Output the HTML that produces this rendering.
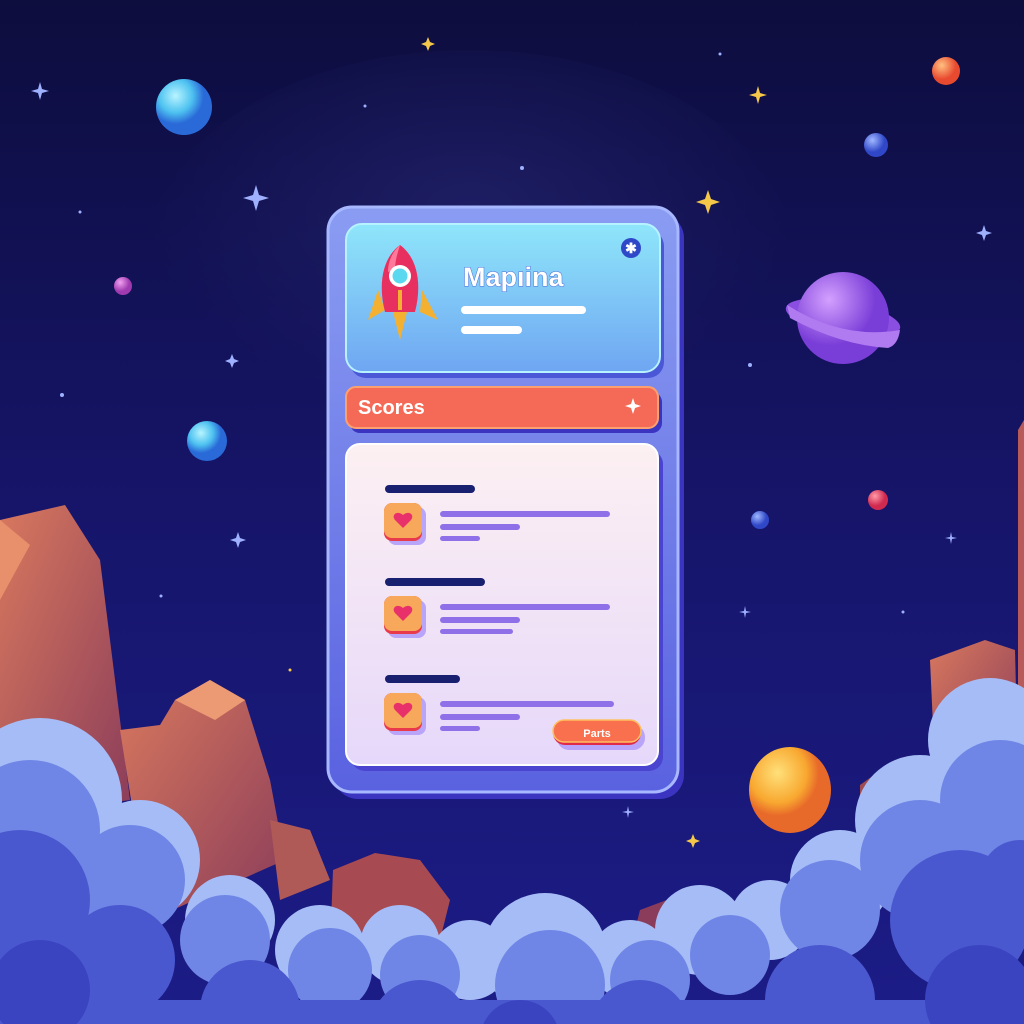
<!DOCTYPE html>
<html><head><meta charset="utf-8"><style>
html,body{margin:0;padding:0;width:1024px;height:1024px;overflow:hidden;background:#14125a}
svg{display:block}
text{font-family:"Liberation Sans",sans-serif;font-weight:bold}
</style></head><body>
<svg width="1024" height="1024" viewBox="0 0 1024 1024">
<defs>
<linearGradient id="bg" x1="0" y1="0" x2="0" y2="1">
<stop offset="0" stop-color="#0d0d3e"/><stop offset="0.5" stop-color="#16156a"/><stop offset="1" stop-color="#1c1c88"/></linearGradient>
<radialGradient id="glow" cx="0.5" cy="0.4" r="0.5"><stop offset="0" stop-color="#262670" stop-opacity="0.6"/><stop offset="1" stop-color="#262670" stop-opacity="0"/></radialGradient>
<linearGradient id="hdr" x1="0" y1="0" x2="0" y2="1"><stop offset="0" stop-color="#8fe6fa"/><stop offset="1" stop-color="#6fa6f2"/></linearGradient>
<linearGradient id="lst" x1="0" y1="0" x2="0" y2="1"><stop offset="0" stop-color="#fdf0f2"/><stop offset="1" stop-color="#e6d8fa"/></linearGradient>
<linearGradient id="card" x1="0" y1="0" x2="0" y2="1"><stop offset="0" stop-color="#8a9cf2"/><stop offset="1" stop-color="#5a62e0"/></linearGradient>
<linearGradient id="rock" x1="0" y1="0" x2="1" y2="1"><stop offset="0" stop-color="#d8785e"/><stop offset="1" stop-color="#8a3c5a"/></linearGradient>
<linearGradient id="cl" x1="0" y1="0" x2="0" y2="1"><stop offset="0" stop-color="#8aa4f2"/><stop offset="1" stop-color="#4a5ad4"/></linearGradient>
<radialGradient id="pb" cx="0.35" cy="0.3"><stop offset="0" stop-color="#b8f4ff"/><stop offset="0.6" stop-color="#4ec2f0"/><stop offset="1" stop-color="#2a6ad8"/></radialGradient>
<radialGradient id="pp" cx="0.35" cy="0.3"><stop offset="0" stop-color="#d4a0ff"/><stop offset="1" stop-color="#7a3ed8"/></radialGradient>
<radialGradient id="py" cx="0.35" cy="0.3"><stop offset="0" stop-color="#ffe07a"/><stop offset="0.7" stop-color="#f8a830"/><stop offset="1" stop-color="#e86a2a"/></radialGradient>
<radialGradient id="po" cx="0.35" cy="0.3"><stop offset="0" stop-color="#ffc080"/><stop offset="1" stop-color="#e84a30"/></radialGradient>
<radialGradient id="pr" cx="0.35" cy="0.3"><stop offset="0" stop-color="#ff9aa8"/><stop offset="1" stop-color="#d02a50"/></radialGradient>
<radialGradient id="pk" cx="0.35" cy="0.3"><stop offset="0" stop-color="#f0a0f0"/><stop offset="1" stop-color="#a03ab0"/></radialGradient>
<radialGradient id="pd" cx="0.35" cy="0.3"><stop offset="0" stop-color="#a0b8ff"/><stop offset="1" stop-color="#3048c8"/></radialGradient>
</defs>
<rect width="1024" height="1024" fill="url(#bg)"/>
<ellipse cx="470" cy="250" rx="320" ry="200" fill="url(#glow)"/>
<!-- stars -->
<g fill="#9fb0ff">
<path d="M256 185l3 10 10 3-10 3-3 10-3-10-10-3 10-3z"/>
<path d="M40 82l2 7 7 2-7 2-2 7-2-7-7-2 7-2z"/>
<path d="M984 225l2 6 6 2-6 2-2 6-2-6-6-2 6-2z"/>
<path d="M238 532l2 6 6 2-6 2-2 6-2-6-6-2 6-2z"/>
<path d="M232 354l2 5 5 2-5 2-2 5-2-5-5-2 5-2z"/>
<path d="M951 532l1 5 5 1-5 1-1 5-1-5-5-1 5-1z"/>
<path d="M745 606l1 5 5 1-5 1-1 5-1-5-5-1 5-1z"/>
<path d="M628 806l1 5 5 1-5 1-1 5-1-5-5-1 5-1z"/>
<circle cx="62" cy="395" r="2"/><circle cx="80" cy="212" r="1.5"/><circle cx="522" cy="168" r="2"/><circle cx="750" cy="365" r="2"/><circle cx="903" cy="612" r="1.5"/><circle cx="161" cy="596" r="1.5"/><circle cx="720" cy="54" r="1.5"/><circle cx="365" cy="106" r="1.5"/>
</g>
<g fill="#f5c84a">
<path d="M708 190l3 9 9 3-9 3-3 9-3-9-9-3 9-3z"/>
<path d="M758 86l2 7 7 2-7 2-2 7-2-7-7-2 7-2z"/>
<path d="M428 37l2 5 5 2-5 2-2 5-2-5-5-2 5-2z"/>
<path d="M693 834l2 5 5 2-5 2-2 5-2-5-5-2 5-2z"/>
<circle cx="290" cy="670" r="1.5"/>
</g>
<!-- planets -->
<circle cx="184" cy="107" r="28" fill="url(#pb)"/>
<circle cx="207" cy="441" r="20" fill="url(#pb)"/>
<circle cx="123" cy="286" r="9" fill="url(#pk)"/>
<circle cx="946" cy="71" r="14" fill="url(#po)"/>
<circle cx="876" cy="145" r="12" fill="url(#pd)"/>
<circle cx="878" cy="500" r="10" fill="url(#pr)"/>
<circle cx="760" cy="520" r="9" fill="url(#pd)"/>
<ellipse cx="790" cy="790" rx="41" ry="43" fill="url(#py)"/>
<ellipse cx="843" cy="318" rx="58" ry="17" fill="#8a4ee0" transform="rotate(10 843 318)"/>
<circle cx="843" cy="318" r="46" fill="url(#pp)"/>
<path d="M787 305 Q843 340 900 330 Q898 345 888 348 Q840 345 790 318z" fill="#b07af0"/>
<!-- rocks -->
<path d="M0 520 L65 505 L100 560 L130 800 L0 820z" fill="url(#rock)"/>
<path d="M0 520 L30 545 L0 600z" fill="#e8906c"/>
<path d="M120 730 L160 725 L175 700 L210 680 L245 700 L270 780 L285 860 L150 920z" fill="url(#rock)"/>
<path d="M175 700 L210 680 L245 700 L215 720z" fill="#ec9a74"/>
<path d="M270 820 L310 830 L330 880 L280 900z" fill="#b05a58"/>
<path d="M333 870 L375 853 L420 860 L450 900 L440 940 L330 950z" fill="#a84a52"/>
<path d="M930 660 L985 640 L1015 650 L1018 770 L935 770z" fill="url(#rock)"/>
<path d="M1018 430 L1024 420 L1024 700 L1018 700z" fill="#b85a5a"/>
<path d="M860 785 L895 760 L910 850 L860 860z" fill="#a04a52"/>
<path d="M640 910 L680 895 L705 930 L630 950z" fill="#8a3c5a"/>
<!-- back clouds (light) -->
<g fill="#a6bcf6">
<circle cx="40" cy="800" r="82"/><circle cx="140" cy="860" r="60"/><circle cx="230" cy="920" r="45"/>
<circle cx="320" cy="950" r="45"/><circle cx="400" cy="945" r="40"/><circle cx="470" cy="960" r="40"/>
<circle cx="545" cy="955" r="62"/><circle cx="630" cy="960" r="40"/><circle cx="700" cy="930" r="45"/><circle cx="770" cy="920" r="40"/>
<circle cx="840" cy="880" r="50"/><circle cx="920" cy="820" r="65"/><circle cx="990" cy="740" r="62"/>
</g>
<!-- mid clouds -->
<g fill="#6f86e6">
<circle cx="30" cy="830" r="70"/><circle cx="130" cy="880" r="55"/><circle cx="225" cy="940" r="45"/>
<circle cx="330" cy="970" r="42"/><circle cx="420" cy="975" r="40"/><circle cx="550" cy="985" r="55"/>
<circle cx="650" cy="980" r="40"/><circle cx="730" cy="955" r="40"/><circle cx="830" cy="910" r="50"/>
<circle cx="920" cy="860" r="60"/><circle cx="1000" cy="800" r="60"/>
</g>
<g fill="#4a58d0">
<circle cx="20" cy="900" r="70"/><circle cx="120" cy="960" r="55"/><circle cx="250" cy="1010" r="50"/><circle cx="420" cy="1030" r="50"/>
<circle cx="640" cy="1030" r="50"/><circle cx="820" cy="1000" r="55"/><circle cx="960" cy="920" r="70"/><circle cx="1020" cy="880" r="40"/>
<rect x="0" y="1000" width="1024" height="24"/>
</g>
<g fill="#3a44c0">
<circle cx="40" cy="990" r="50"/><circle cx="980" cy="1000" r="55"/><circle cx="520" cy="1040" r="40"/>
</g>
<!-- card -->
<rect x="334" y="214" width="350" height="585" rx="24" fill="#3a34c0"/>
<rect x="328" y="207" width="350" height="585" rx="24" fill="url(#card)" stroke="#a8b8ff" stroke-width="3"/>
<rect x="350" y="230" width="314" height="148" rx="16" fill="#4a58d8"/>
<rect x="346" y="224" width="314" height="148" rx="16" fill="url(#hdr)" stroke="#b6f2ff" stroke-width="2"/>
<circle cx="631" cy="248" r="10" fill="#2e48c8"/>
<text x="631" y="253" font-size="14" fill="#fff" text-anchor="middle">✱</text>
<!-- rocket -->
<g>
<path d="M378 290 L368 320 L385 310z" fill="#f4b030"/>
<path d="M422 290 L438 320 L420 312z" fill="#f4b030"/>
<path d="M400 245 C382 258 378 285 385 312 L415 312 C422 285 418 258 400 245z" fill="#e83060"/>
<path d="M400 245 C392 252 388 262 388 272 L395 270 C395 260 398 252 400 245z" fill="#ff7a9a"/>
<circle cx="400" cy="276" r="11" fill="#fff"/><circle cx="400" cy="276" r="7.5" fill="#5ad8f0"/>
<path d="M393 312 L400 340 L407 312z" fill="#f4b030"/>
<rect x="398" y="290" width="4" height="20" fill="#f4b030"/>
</g>
<text x="463" y="286" font-size="27" fill="#fff" stroke="#4a6ad8" stroke-width="1" style="paint-order:stroke">Mapıina</text>
<rect x="461" y="306" width="125" height="8" rx="4" fill="#fff"/>
<rect x="461" y="326" width="61" height="8" rx="4" fill="#fff"/>
<!-- scores -->
<rect x="350" y="392" width="312" height="41" rx="10" fill="#3a34c0"/>
<rect x="346" y="387" width="312" height="41" rx="10" fill="#f46a56" stroke="#fda070" stroke-width="2"/>
<text x="358" y="414" font-size="20" fill="#fff">Scores</text>
<path d="M633 398l2 6 6 2-6 2-2 6-2-6-6-2 6-2z" fill="#fff"/>
<!-- list -->
<rect x="351" y="450" width="312" height="321" rx="14" fill="#4a44d0"/>
<rect x="346" y="444" width="312" height="321" rx="14" fill="url(#lst)" stroke="#fff" stroke-width="2"/>
<g>
<rect x="385" y="485" width="90" height="8" rx="4" fill="#1a2070"/>
<rect x="388" y="507" width="38" height="38" rx="8" fill="#b8a4f8"/>
<rect x="384" y="503" width="38" height="38" rx="8" fill="#e83a4a"/>
<rect x="384" y="503" width="38" height="35" rx="8" fill="#f8a85a"/>
<path d="M403 528 L395 520 C391 515 397 510 403 515 C409 510 415 515 411 520z" fill="#e8306a"/>
<rect x="440" y="511" width="170" height="6" rx="3" fill="#9070e8"/>
<rect x="440" y="524" width="80" height="6" rx="3" fill="#9070e8"/>
<rect x="440" y="536" width="40" height="5" rx="2.5" fill="#9070e8"/>
</g>
<g transform="translate(0,93)">
<rect x="385" y="485" width="100" height="8" rx="4" fill="#1a2070"/>
<rect x="388" y="507" width="38" height="38" rx="8" fill="#b8a4f8"/>
<rect x="384" y="503" width="38" height="38" rx="8" fill="#e83a4a"/>
<rect x="384" y="503" width="38" height="35" rx="8" fill="#f8a85a"/>
<path d="M403 528 L395 520 C391 515 397 510 403 515 C409 510 415 515 411 520z" fill="#e8306a"/>
<rect x="440" y="511" width="170" height="6" rx="3" fill="#9070e8"/>
<rect x="440" y="524" width="80" height="6" rx="3" fill="#9070e8"/>
<rect x="440" y="536" width="73" height="5" rx="2.5" fill="#9070e8"/>
</g>
<g transform="translate(0,190)">
<rect x="385" y="485" width="75" height="8" rx="4" fill="#1a2070"/>
<rect x="388" y="507" width="38" height="38" rx="8" fill="#b8a4f8"/>
<rect x="384" y="503" width="38" height="38" rx="8" fill="#e83a4a"/>
<rect x="384" y="503" width="38" height="35" rx="8" fill="#f8a85a"/>
<path d="M403 528 L395 520 C391 515 397 510 403 515 C409 510 415 515 411 520z" fill="#e8306a"/>
<rect x="440" y="511" width="174" height="6" rx="3" fill="#9070e8"/>
<rect x="440" y="524" width="80" height="6" rx="3" fill="#9070e8"/>
<rect x="440" y="536" width="40" height="5" rx="2.5" fill="#9070e8"/>
</g>
<rect x="557" y="725" width="88" height="25" rx="12" fill="#b8a4f8"/>
<rect x="553" y="720" width="88" height="25" rx="12" fill="#e02a4a"/>
<rect x="553" y="720" width="88" height="22" rx="11" fill="#f8704e" stroke="#ffc060" stroke-width="1.5"/>
<text x="597" y="737" font-size="11" fill="#fff" text-anchor="middle">Parts</text>
</svg>
</body></html>
